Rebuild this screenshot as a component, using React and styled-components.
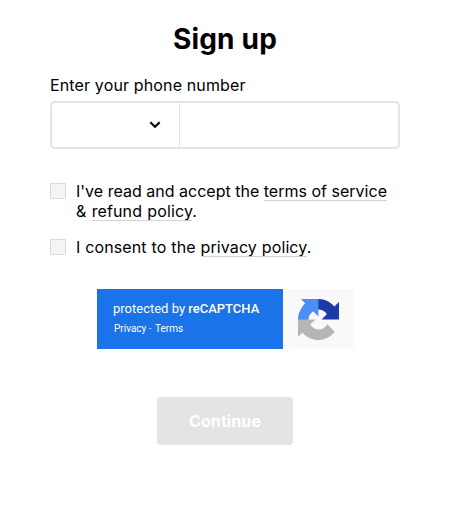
import * as React from 'react';
import styled, { createGlobalStyle } from 'styled-components';

export default function App() {
  return (
    <>
      <GlobalStyle />
      <Form>
        <Title>Sign up</Title>
        <Label>Enter your phone number</Label>
        <PhoneField>
          <CountrySelect>
            <svg width="12" height="8" viewBox="0 0 12 8">
              <path d="M1.3 1.2L6 5.7l4.7-4.5" fill="none" stroke="#000" strokeWidth="2.1" />
            </svg>
          </CountrySelect>
          <PhoneInput type="tel" />
        </PhoneField>
        <Consent>
          <CheckBox type="checkbox" />
          <ConsentText>
            <Line $spacing="0.01px">I've read and accept the <Link>terms of service</Link></Line>
            <Line $spacing="0.12px" $wordSpacing="0.6px">&amp; <Link>refund policy</Link>.</Line>
          </ConsentText>
        </Consent>
        <Consent>
          <CheckBox type="checkbox" />
          <ConsentText>
            <Line $spacing="0.1px" $wordSpacing="0.3px">I consent to the <Link>privacy policy</Link>.</Line>
          </ConsentText>
        </Consent>
        <Captcha>
          <CaptchaInfo>
            <Protected>protected by <strong>reCAPTCHA</strong></Protected>
            <CaptchaLinks>Privacy<span> - </span>Terms</CaptchaLinks>
          </CaptchaInfo>
          <CaptchaLogo>
            <svg width="41" height="41" viewBox="0 0 64 64">
              <path fill="#1c3aa9" d="M64 31.955l-.033-1.37V4.687l-7.16 7.16C50.948 4.674 42.033.093 32.05.093c-10.4 0-19.622 4.96-25.458 12.64l11.736 11.86a15.55 15.55 0 0 1 4.754-5.334c2.05-1.6 4.952-2.906 8.968-2.906.485 0 .86.057 1.135.163 4.976.393 9.288 3.14 11.828 7.124l-8.307 8.307L64 31.953" />
              <path fill="#4a8ff5" d="M31.862.094l-1.37.033H4.594l7.16 7.16C4.58 13.147 0 22.06 0 32.046c0 10.4 4.96 19.622 12.64 25.458L24.5 45.768a15.55 15.55 0 0 1-5.334-4.754c-1.6-2.05-2.906-4.952-2.906-8.968 0-.485.057-.86.163-1.135.393-4.976 3.14-9.288 7.124-11.828l8.307 8.307L31.86.095" />
              <path fill="#b5b5b5" d="M.001 32.045l.033 1.37v25.898l7.16-7.16c5.86 7.173 14.774 11.754 24.76 11.754 10.4 0 19.622-4.96 25.458-12.64l-11.736-11.86a15.55 15.55 0 0 1-4.754 5.334c-2.05 1.6-4.952 2.906-8.968 2.906-.485 0-.86-.057-1.135-.163-4.976-.393-9.288-3.14-11.828-7.124l8.307-8.307c-10.522.04-22.4.066-27.295-.005" />
            </svg>
          </CaptchaLogo>
        </Captcha>
        <Button disabled>Continue</Button>
      </Form>
    </>
  );
}

const GlobalStyle = createGlobalStyle`
  * {
    box-sizing: border-box;
  }

  body {
    margin: 0;
    background: #fff;
    color: #000;
    font-family: Inter, "Liberation Sans", sans-serif;
  }
`;

const Form = styled.form`
  display: flex;
  flex-direction: column;
  width: 350px;
  margin-left: 50px;
  padding-top: 20px;
`;

const Title = styled.h1`
  margin: 0;
  text-align: center;
  font-size: 28px;
  font-weight: 700;
  letter-spacing: 0.2px;
  line-height: 38px;
`;

const Label = styled.label`
  margin-top: 17px;
  font-size: 16px;
  letter-spacing: 0.14px;
  line-height: 20px;
  white-space: nowrap;
`;

const PhoneField = styled.div`
  display: flex;
  height: 48px;
  margin: 6px 0 32px;
  border: 2px solid #e4e4e4;
  border-radius: 5px;
`;

const CountrySelect = styled.div`
  display: flex;
  align-items: center;
  justify-content: flex-end;
  width: 128px;
  padding-right: 18px;
  border-right: 1px solid #e4e4e4;
`;

const PhoneInput = styled.input`
  flex: 1;
  min-width: 0;
  padding: 0 12px;
  border: 0;
  background: none;
  font: inherit;
`;

const Consent = styled.div`
  display: flex;
  gap: 10px;
  margin-bottom: 16px;
`;

const CheckBox = styled.input`
  appearance: none;
  flex: none;
  width: 16px;
  height: 16px;
  margin: 2px 0 0;
  border: 1px solid #dadada;
  border-radius: 1px;
  background: #f4f4f4;
`;

const ConsentText = styled.div`
  font-size: 16px;
  line-height: 20px;
  white-space: nowrap;
`;

const Line = styled.div`
  height: 20px;
  letter-spacing: ${(props) => props.$spacing};
  word-spacing: ${(props) => props.$wordSpacing || 'normal'};
`;

const Link = styled.span`
  background: linear-gradient(#d4d4d4, #d4d4d4) 0 100% / 100% 1px no-repeat;
`;

const Captcha = styled.div`
  display: flex;
  width: 256px;
  height: 60px;
  margin: 16px 0 0 47px;
  font-family: Roboto, sans-serif;
`;

const CaptchaInfo = styled.div`
  width: 186px;
  padding: 11px 0 0 16px;
  background: #1a73e8;
  color: #fff;
`;

const Protected = styled.div`
  font-size: 13px;
  line-height: 18px;
  white-space: nowrap;

  strong {
    font-weight: 500;
  }
`;

const CaptchaLinks = styled.div`
  margin: 4px 0 0 1px;
  font-size: 10px;
  line-height: 13px;

  span {
    margin-right: 1px;
    opacity: 0.7;
  }
`;

const CaptchaLogo = styled.div`
  display: flex;
  align-items: center;
  justify-content: center;
  width: 70px;
  padding-top: 1px;
  background: #f9f9f9;
`;

const Button = styled.button`
  align-self: center;
  width: 136px;
  height: 48px;
  margin-top: 48px;
  padding: 0;
  border: 0;
  border-radius: 4px;
  background: #e4e4e4;
  color: #fff;
  font-family: inherit;
  font-size: 16px;
  font-weight: 700;
  letter-spacing: 0.1px;
`;
